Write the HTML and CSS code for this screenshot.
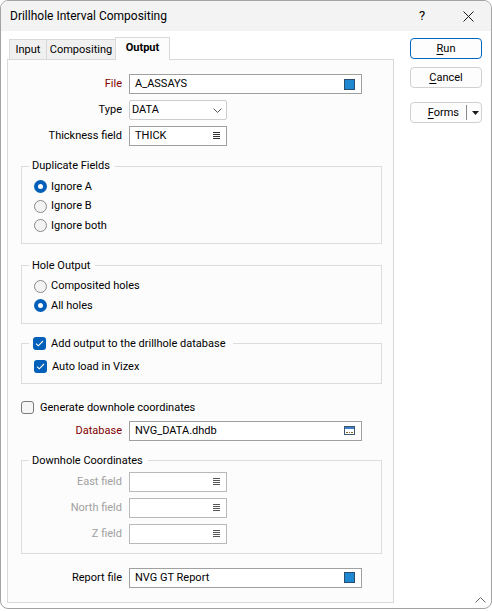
FILE: index.html
```html
<!DOCTYPE html>
<html>
<head>
<meta charset="utf-8">
<title>Drillhole Interval Compositing</title>
<link rel="stylesheet" href="styles.css">
</head>
<body>
<div class="window">
  <div class="titlebar">
    <span class="title">Drillhole Interval Compositing</span>
    <span class="cap help">?</span>
    <span class="cap"><svg width="11" height="11" viewBox="0 0 11 11"><path d="M0.5 0.5L10.5 10.5M10.5 0.5L0.5 10.5" stroke="#1a1a1a" stroke-width="1" fill="none"/></svg></span>
  </div>
  <div class="body">
    <div class="main">
      <div class="tabs">
        <div class="tab t-input">Input</div>
        <div class="tab t-comp">Compositing</div>
        <div class="tab t-out active">Output</div>
      </div>
      <div class="panel">
        <div class="row first">
          <span class="lbl req">File</span>
          <div class="field wide"><span class="val">A_ASSAYS</span><span class="sq"></span></div>
        </div>
        <div class="row gap">
          <span class="lbl">Type</span>
          <div class="field narrow combo"><span class="val">DATA</span><svg width="9" height="5" viewBox="0 0 9 5"><path d="M0.5 0.5L4.5 4.5L8.5 0.5" stroke="#555" stroke-width="1" fill="none"/></svg></div>
        </div>
        <div class="row gap">
          <span class="lbl">Thickness field</span>
          <div class="field narrow"><span class="val">THICK</span><svg class="lines" width="7" height="8" viewBox="0 0 7 8"><path d="M0 0.5H7M0 2.5H7M0 4.5H7M0 6.5H7" stroke="#333" stroke-width="1"/></svg></div>
        </div>

        <fieldset class="grp g-dup">
          <legend>Duplicate Fields</legend>
          <div class="inner radios">
            <div class="opt"><span class="radio on"></span><span>Ignore A</span></div>
            <div class="opt"><span class="radio"></span><span>Ignore B</span></div>
            <div class="opt"><span class="radio"></span><span>Ignore both</span></div>
          </div>
        </fieldset>

        <fieldset class="grp g-hole">
          <legend>Hole Output</legend>
          <div class="inner radios">
            <div class="opt"><span class="radio"></span><span>Composited holes</span></div>
            <div class="opt"><span class="radio on"></span><span>All holes</span></div>
          </div>
        </fieldset>

        <fieldset class="grp g-add">
          <legend class="cblegend"><span class="cb on"><svg width="9" height="7" viewBox="0 0 9 7"><path d="M1 3.6L3.3 5.8L8 1" stroke="#fff" stroke-width="1.1" fill="none"/></svg></span><span>Add output to the drillhole database</span></legend>
          <div class="inner checks">
            <div class="opt"><span class="cb on"><svg width="9" height="7" viewBox="0 0 9 7"><path d="M1 3.6L3.3 5.8L8 1" stroke="#fff" stroke-width="1.1" fill="none"/></svg></span><span>Auto load in Vizex</span></div>
          </div>
        </fieldset>

        <div class="opt gen"><span class="cb"></span><span>Generate downhole coordinates</span></div>

        <div class="row dbrow">
          <span class="lbl req">Database</span>
          <div class="field wide"><span class="val">NVG_DATA.dhdb</span>
            <svg width="11" height="9" viewBox="0 0 11 9"><rect x="0.5" y="0.5" width="10" height="8" fill="#fff" stroke="#3d5873"/><rect x="1" y="1" width="9" height="2" fill="#3f7fc8"/><rect x="2" y="6" width="2" height="1" fill="#8a6a1c"/><rect x="5" y="6" width="1" height="1" fill="#8a6a1c"/><rect x="7" y="6" width="2" height="1" fill="#8a6a1c"/></svg>
          </div>
        </div>

        <fieldset class="grp g-coord">
          <legend>Downhole Coordinates</legend>
          <div class="inner fields">
            <div class="row">
              <span class="lbl sub dis">East field</span>
              <div class="field narrow disf"><span class="val"></span><svg width="7" height="8" viewBox="0 0 7 8"><path d="M0 0.5H7M0 2.5H7M0 4.5H7M0 6.5H7" stroke="#555" stroke-width="1"/></svg></div>
            </div>
            <div class="row gap">
              <span class="lbl sub dis">North field</span>
              <div class="field narrow disf"><span class="val"></span><svg width="7" height="8" viewBox="0 0 7 8"><path d="M0 0.5H7M0 2.5H7M0 4.5H7M0 6.5H7" stroke="#555" stroke-width="1"/></svg></div>
            </div>
            <div class="row gap">
              <span class="lbl sub dis">Z field</span>
              <div class="field narrow disf"><span class="val"></span><svg width="7" height="8" viewBox="0 0 7 8"><path d="M0 0.5H7M0 2.5H7M0 4.5H7M0 6.5H7" stroke="#555" stroke-width="1"/></svg></div>
            </div>
          </div>
        </fieldset>

        <div class="row report">
          <span class="lbl">Report file</span>
          <div class="field wide"><span class="val">NVG GT Report</span><span class="sq"></span></div>
        </div>
      </div>
    </div>
    <div class="side">
      <div class="btn primary"><span><u>R</u>un</span></div>
      <div class="btn cancel"><span><u>C</u>ancel</span></div>
      <div class="btn forms"><span class="ftext"><u>F</u>orms</span><span class="sep"></span><svg width="7" height="4" viewBox="0 0 7 4"><path d="M0 0H7L3.5 4Z" fill="#1a1a1a"/></svg></div>
    </div>
  </div>
  <svg class="grip" width="11" height="6" viewBox="0 0 11 6"><path d="M0.5 5.5L5.5 0.5L10.5 5.5" stroke="#666" stroke-width="1" fill="none"/></svg>
</div>
</body>
</html>
```

FILE: styles.css
```css
* { box-sizing: border-box; }
html, body { margin: 0; padding: 0; background: #ffffff; }
body {
  font-family: Roboto, "Noto Sans", sans-serif;
  font-size: 11px;
  color: #000;
  line-height: 16px;
}
.window {
  width: 492px;
  height: 609px;
  border: 1px solid #a3a3a3;
  border-radius: 8px;
  overflow: hidden;
  background: #ffffff;
  position: relative;
  display: flex;
  flex-direction: column;
}
.titlebar {
  height: 30px;
  flex: none;
  display: flex;
  align-items: center;
  background: #f3f3f3;
}
.title { flex: 1; padding-left: 9px; font-size: 12px; }
.cap {
  width: 46px;
  height: 30px;
  display: flex;
  align-items: center;
  justify-content: center;
}
.help { font-size: 13px; }
.body {
  flex: 1;
  display: flex;
  gap: 16px;
  padding: 6px 9px 5px 6px;
}
.main {
  width: 387px;
  display: flex;
  flex-direction: column;
}
.tabs {
  height: 22px;
  display: flex;
  align-items: flex-end;
  padding-left: 2px;
  flex: none;
}
.tab {
  height: 20px;
  border: 1px solid #d9d9d9;
  border-bottom: none;
  background: #f0f0f0;
  display: flex;
  align-items: center;
  justify-content: center;
  margin-right: -1px;
}
.t-input { width: 38px; }
.t-comp { width: 70px; }
.t-out { width: 55px; }
.tab.active {
  height: 23px;
  margin-bottom: -1px;
  background: #fcfcfc;
  font-weight: bold;
  position: relative;
  z-index: 1;
  padding-bottom: 2px;
}
.panel {
  flex: 1;
  border: 1px solid #d9d9d9;
  background: #fcfcfc;
  padding: 14px 0 0 0;
  display: flex;
  flex-direction: column;
}
.row {
  display: flex;
  align-items: center;
  height: 20px;
  flex: none;
}
.row.gap { margin-top: 6px; }
.lbl {
  width: 121px;
  padding-right: 7px;
  text-align: right;
  flex: none;
  white-space: nowrap;
}
.lbl.sub { width: 107px; }
.req { color: #800000; }
.dis { color: #a0a0a0; }
.field {
  height: 20px;
  border: 1px solid #a0a0a0;
  background: #ffffff;
  display: flex;
  align-items: center;
  padding: 0 6px 0 5px;
  flex: none;
}
.field.wide { width: 233px; }
.field.narrow { width: 98px; }
.field.combo {
  border-color: #cdcdcd;
  border-radius: 2px;
  padding-left: 2px;
  padding-right: 4px;
}
.field.disf { border-color: #b9b9b9; }
.val { flex: 1; white-space: nowrap; }
.sq {
  width: 11px;
  height: 11px;
  background: #1f88d0;
  border: 1px solid #2a4e70;
}
.grp {
  margin: 12px 11px 0 13px;
  border: 1px solid #dcdcdc;
  padding: 0;
  min-width: 0;
  flex: none;
}
.grp legend {
  margin-left: 7px;
  padding: 0 5px 0 3px;
  line-height: 16px;
}
.g-dup { margin-top: 12px; }
.g-hole { margin-top: 14px; }
.inner.radios { padding: 3px 0 7px 12px; }
.inner.checks { padding: 5px 0 6px 12px; }
.inner.fields { padding: 3px 0 9px 0; }
.opt {
  display: flex;
  align-items: center;
  gap: 4px;
}
.radios .opt { height: 19.5px; }
.checks .opt { height: 20px; gap: 5px; }
.radio {
  width: 13px;
  height: 13px;
  border-radius: 50%;
  border: 1px solid #8a8a8a;
  background: #f3f3f3;
  flex: none;
}
.radio.on {
  border: none;
  background: #005fb8;
  display: flex;
  align-items: center;
  justify-content: center;
}
.radio.on::after {
  content: "";
  width: 5px;
  height: 5px;
  border-radius: 50%;
  background: #fff;
}
.cb {
  width: 13px;
  height: 13px;
  border-radius: 3px;
  border: 1px solid #7a7a7a;
  background: #f6f6f6;
  flex: none;
  display: flex;
  align-items: center;
  justify-content: center;
}
.cb.on {
  border: none;
  background: #005fb8;
}
.cblegend {
  display: flex;
  align-items: center;
  gap: 5px;
  padding: 0 7px 0 4px !important;
}
.gen {
  height: 20px;
  margin: 14px 0 0 13px;
  gap: 6px;
  flex: none;
}
.dbrow { margin-top: 3px; }
.g-coord { margin-top: 12px; }
.report { margin-top: 14px; }
.side {
  width: 72px;
  padding-top: 1px;
  display: flex;
  flex-direction: column;
}
.btn {
  height: 21px;
  border: 1px solid #d0d0d0;
  border-radius: 4px;
  background: #fdfdfd;
  display: flex;
  align-items: center;
  justify-content: center;
  flex: none;
}
.btn.primary { border-color: #0067c0; }
.btn.cancel { margin-top: 8px; }
.btn.forms {
  margin-top: 14px;
  justify-content: flex-end;
  padding-right: 2px;
}
.ftext { margin-right: 7px; }
.sep {
  width: 1px;
  height: 15px;
  background: #8a8a8a;
  margin-right: 5px;
}
u { text-decoration: underline; text-underline-offset: 2px; }
.grip {
  position: absolute;
  right: 5px;
  bottom: 5px;
}
```
